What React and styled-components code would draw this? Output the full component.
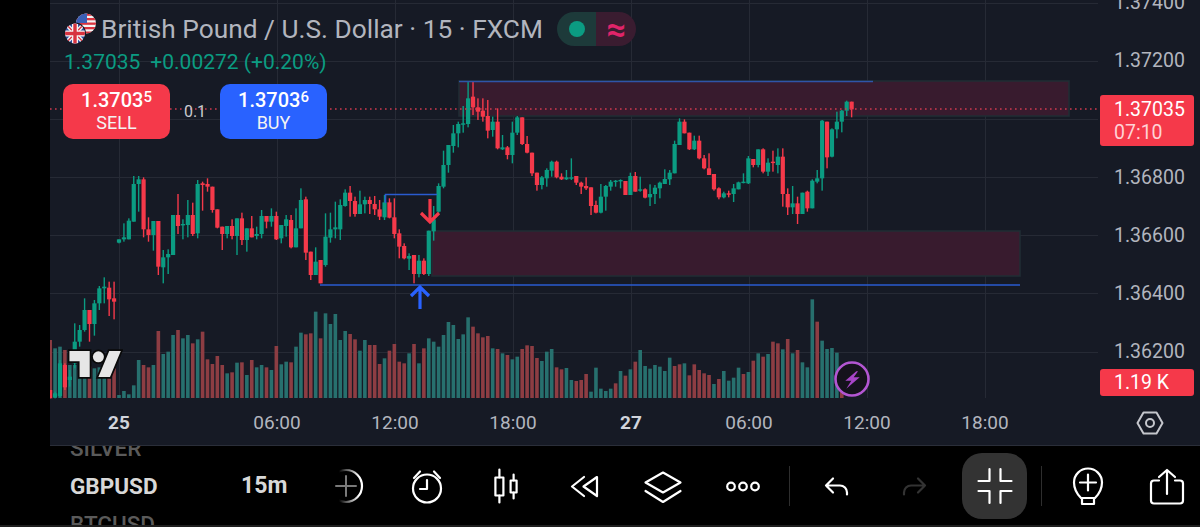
import React from 'react'
import styled, { createGlobalStyle } from 'styled-components'

const GREEN = '#0b9c82'
const RED = '#f5394a'
const BLUE = '#2962ff'
const PANEL = '#161a25'
const TEXT = '#b2b5be'

// x of a candle, k = 0 is the first bar after the weekend gap
const barX = (k) => 119 + k * 4.917

// [bodyTop, bodyBottom, wickTop, wickBottom, colour], read off the chart in 3x units
const segmentA = [
  [690, 715, 690, 715, 'r'], [700, 712, 695, 715, 'g'], [610, 708, 600, 712, 'g'], [615, 682, 610, 690, 'r'],
  [650, 660, 630, 680, 'g'], [545, 610, 490, 625, 'g'], [510, 545, 495, 560, 'g'], [450, 510, 415, 515, 'g'],
  [450, 492, 450, 545, 'r'], [430, 492, 420, 527, 'g'], [385, 430, 378, 450, 'g'], [380, 385, 352, 430, 'g'],
  [383, 418, 365, 468, 'r'], [415, 425, 365, 478, 'r'],
  [238, 248, 238, 250, 'g'], [232, 238, 190, 245, 'g'], [182, 238, 175, 238, 'g'], [72, 185, 48, 185, 'g'],
  [58, 72, 48, 155, 'g'], [58, 208, 52, 232, 'r'], [208, 225, 172, 245, 'r'], [183, 225, 183, 272, 'g'],
  [183, 320, 183, 345, 'r'], [292, 322, 270, 370, 'g'], [282, 292, 268, 342, 'g'], [165, 285, 165, 285, 'g'],
  [165, 198, 102, 222, 'r'], [192, 195, 178, 238, 'g'], [165, 195, 120, 232, 'g'], [165, 222, 128, 228, 'r'],
  [72, 220, 60, 235, 'g'], [70, 75, 65, 152, 'r'], [72, 80, 55, 95, 'r'], [80, 150, 80, 158, 'r'],
  [148, 203, 148, 205, 'r'], [200, 222, 200, 270, 'r'], [198, 222, 198, 235, 'g'], [198, 228, 178, 238, 'r'],
  [175, 228, 175, 285, 'g'], [175, 240, 158, 255, 'r'], [205, 240, 205, 275, 'g'], [205, 232, 168, 232, 'r'],
  [222, 228, 200, 238, 'g'], [168, 222, 150, 235, 'g'], [168, 185, 168, 205, 'r'], [168, 185, 145, 200, 'g'],
  [168, 238, 155, 240, 'r'], [195, 235, 195, 250, 'g'], [178, 198, 165, 230, 'g'], [180, 262, 165, 265, 'r'],
  [205, 262, 145, 262, 'g'], [120, 205, 85, 205, 'g'], [118, 278, 110, 300, 'r'], [275, 345, 275, 360, 'r'],
  [305, 345, 262, 345, 'g'],
]

const segmentB = [
  [570, 640, 570, 640, 'r'], [500, 585, 430, 590, 'g'], [478, 503, 428, 518, 'g'], [472, 478, 395, 505, 'g'],
  [405, 478, 388, 510, 'g'], [368, 408, 358, 410, 'g'], [368, 393, 348, 440, 'r'], [393, 432, 380, 440, 'r'],
  [403, 432, 362, 432, 'g'], [390, 403, 380, 430, 'g'], [390, 402, 380, 432, 'r'], [402, 418, 378, 435, 'r'],
  [418, 440, 390, 450, 'r'], [397, 442, 375, 450, 'g'], [397, 443, 385, 445, 'r'], [442, 492, 385, 505, 'r'],
  [490, 530, 478, 565, 'r'], [528, 565, 520, 568, 'r'], [558, 566, 550, 600, 'g'], [555, 612, 555, 640, 'r'],
  [572, 612, 555, 622, 'g'], [572, 612, 565, 615, 'r'], [482, 612, 482, 618, 'g'], [448, 484, 408, 512, 'g'],
  [348, 425, 340, 428, 'g'], [285, 350, 242, 355, 'g'], [225, 285, 225, 308, 'g'], [190, 228, 165, 248, 'g'],
  [162, 190, 155, 232, 'g'], [160, 162, 108, 188, 'g'], [85, 162, 35, 172, 'g'], [80, 112, 35, 135, 'r'],
  [112, 125, 85, 150, 'r'], [122, 140, 85, 155, 'r'], [138, 182, 90, 205, 'r'], [155, 180, 140, 200, 'g'],
  [155, 235, 115, 238, 'r'], [232, 238, 195, 240, 'g'], [232, 255, 228, 268, 'r'], [188, 255, 155, 280, 'g'],
  [142, 188, 138, 195, 'g'], [142, 222, 142, 225, 'r'], [222, 248, 198, 250, 'r'], [248, 310, 248, 318, 'r'],
  [308, 345, 308, 362, 'r'], [322, 345, 318, 358, 'g'], [300, 325, 295, 350, 'g'], [275, 302, 272, 320, 'g'],
  [275, 322, 272, 325, 'r'], [320, 328, 310, 330, 'r'], [322, 328, 300, 330, 'g'], [322, 325, 265, 330, 'g'],
  [318, 338, 318, 345, 'r'], [338, 350, 335, 372, 'r'], [348, 355, 322, 360, 'r'],
]

const segmentC = [
  [352, 408, 352, 435, 'r'], [405, 428, 392, 430, 'r'], [380, 428, 342, 430, 'g'], [348, 380, 345, 422, 'g'],
  [335, 350, 330, 362, 'g'], [332, 335, 330, 350, 'g'], [330, 332, 328, 355, 'g'], [333, 375, 333, 375, 'r'],
  [318, 375, 308, 375, 'g'], [318, 365, 306, 365, 'r'], [358, 362, 320, 365, 'g'], [358, 383, 355, 385, 'r'],
  [372, 382, 343, 408, 'g'], [353, 372, 345, 402, 'g'], [338, 355, 335, 385, 'g'], [327, 342, 298, 342, 'g'],
  [308, 328, 300, 345, 'g'], [222, 310, 212, 310, 'g'], [155, 225, 145, 225, 'g'], [155, 190, 148, 190, 'r'],
  [188, 238, 188, 240, 'r'], [212, 238, 197, 240, 'g'], [212, 265, 197, 268, 'r'], [265, 295, 255, 298, 'r'],
  [295, 315, 250, 315, 'r'], [312, 358, 312, 362, 'r'], [355, 382, 352, 388, 'r'], [370, 382, 365, 385, 'g'],
  [370, 372, 362, 382, 'r'], [355, 372, 342, 396, 'g'], [337, 358, 335, 358, 'g'], [335, 338, 310, 340, 'g'],
  [265, 340, 258, 342, 'g'], [267, 285, 267, 292, 'r'], [238, 285, 238, 292, 'g'], [238, 305, 235, 310, 'r'],
  [278, 305, 265, 318, 'g'], [275, 277, 242, 305, 'r'], [260, 285, 235, 310, 'g'], [260, 372, 235, 410, 'r'],
  [372, 412, 355, 435, 'r'], [400, 412, 348, 432, 'g'], [400, 432, 380, 462, 'r'], [368, 432, 368, 432, 'g'],
  [365, 415, 362, 425, 'r'], [332, 415, 328, 415, 'g'], [325, 335, 300, 340, 'g'], [152, 325, 150, 362, 'g'],
  [155, 262, 155, 295, 'r'], [178, 260, 175, 262, 'g'], [155, 178, 125, 205, 'g'], [122, 155, 120, 187, 'g'],
  [95, 122, 92, 138, 'g'], [95, 118, 95, 142, 'r'],
]

const candles = [
  ...segmentA.map((c) => [...c, 160]),
  ...segmentB.map((c) => [...c, 70]),
  ...segmentC.map((c) => [...c, 70]),
]

// [top, colour] with the three crops they were read from
const volumeA = [
  [90, 'r'], [115, 'g'], [110, 'g'], [120, 'r'], [165, 'g'], [165, 'g'], [180, 'g'], [172, 'g'], [170, 'r'],
  [175, 'g'], [172, 'g'], [180, 'g'], [170, 'r'], [175, 'r'],
  [255, 'g'], [243, 'g'], [253, 'g'], [226, 'g'], [150, 'g'], [165, 'r'], [172, 'r'], [165, 'g'], [63, 'r'],
  [132, 'g'], [125, 'g'], [75, 'g'], [60, 'r'], [85, 'g'], [75, 'g'], [100, 'r'], [88, 'g'], [65, 'r'],
  [148, 'r'], [162, 'r'], [138, 'r'], [165, 'r'], [190, 'g'], [187, 'r'], [158, 'g'], [157, 'r'], [195, 'g'],
  [150, 'r'], [172, 'g'], [165, 'g'], [172, 'r'], [180, 'g'], [108, 'r'], [163, 'g'], [155, 'g'], [157, 'r'],
  [110, 'g'], [68, 'g'], [73, 'r'], [70, 'r'], [5, 'g'],
]
const volumeB = [
  [115, 'r'], [40, 'g'], [72, 'g'], [42, 'g'], [120, 'g'], [93, 'g'], [102, 'r'], [118, 'r'], [152, 'g'],
  [120, 'g'], [135, 'r'], [135, 'r'], [192, 'r'], [175, 'g'], [152, 'r'], [132, 'r'], [185, 'r'], [190, 'r'],
  [160, 'g'], [132, 'r'], [190, 'g'], [145, 'r'], [115, 'g'], [125, 'g'], [140, 'g'], [105, 'g'], [66, 'g'],
  [75, 'g'], [117, 'g'], [103, 'g'], [52, 'g'], [80, 'r'], [100, 'r'], [112, 'r'], [108, 'r'], [145, 'g'],
  [147, 'r'], [160, 'g'], [165, 'r'], [178, 'g'], [170, 'g'], [147, 'r'], [136, 'r'], [138, 'r'], [174, 'r'],
  [183, 'g'], [155, 'g'], [147, 'g'], [202, 'r'], [208, 'r'], [204, 'g'], [240, 'g'], [243, 'r'], [240, 'r'],
  [222, 'r'],
]
const volumeC = [
  [305, 'g'], [233, 'g'], [296, 'g'], [303, 'g'], [296, 'g'], [280, 'r'], [243, 'g'], [257, 'r'], [238, 'g'],
  [215, 'r'], [180, 'g'], [228, 'g'], [236, 'g'], [225, 'g'], [230, 'g'], [243, 'g'], [203, 'g'], [228, 'r'],
  [223, 'r'], [220, 'g'], [256, 'r'], [223, 'r'], [240, 'r'], [250, 'r'], [255, 'r'], [282, 'g'], [267, 'r'],
  [243, 'g'], [272, 'g'], [263, 'g'], [233, 'g'], [252, 'r'], [246, 'g'], [212, 'r'], [190, 'g'], [200, 'r'],
  [192, 'g'], [155, 'r'], [160, 'r'], [178, 'g'], [147, 'r'], [190, 'g'], [180, 'r'], [217, 'g'], [232, 'g'],
  [28, 'g'], [95, 'r'], [152, 'g'], [177, 'g'], [174, 'g'], [188, 'g'], [300, 'r'],
]

const volumes = [
  ...volumeA.map(([v, c]) => [310 + v / 3, c]),
  ...volumeB.map(([v, c]) => [300 + v / 3, c]),
  ...volumeC.map(([v, c]) => [290 + v / 3, c]),
]

const gridX = [119, 277, 395, 513, 631, 749, 867, 985]
const gridY = [3, 61, 119, 177, 235, 293, 352]
const priceTicks = ['1.37400', '1.37200', '', '1.36800', '1.36600', '1.36400', '1.36200']

const GlobalStyle = createGlobalStyle`
  html, body {
    margin: 0;
    padding: 0;
    background: #000;
    font-family: Roboto, 'Liberation Sans', sans-serif;
  }
`

const Screen = styled.div`
  width: 1200px;
  height: 527px;
  display: flex;
  flex-direction: column;
  overflow: hidden;
  background: #000;
`

const Panel = styled.section`
  margin-left: 50px;
  height: 446px;
  flex: none;
  display: flex;
  flex-direction: column;
  background: ${PANEL};
  border-bottom: 1px solid #2a2e39;
  box-sizing: border-box;
`

const ChartRow = styled.div`
  height: 400px;
  flex: none;
  display: flex;
`

const ChartPane = styled.div`
  position: relative;
  width: 1050px;
  flex: none;
`

const ChartSvg = styled.svg`
  display: block;
`

const Legend = styled.div`
  position: absolute;
  left: 12px;
  top: 12px;
  display: flex;
  flex-direction: column;
`

const TitleRow = styled.div`
  display: flex;
  align-items: center;
  height: 34px;
`

const Title = styled.span`
  margin-left: 1px;
  font-size: 26.3px;
  color: ${TEXT};
  white-space: nowrap;
`

const StatusPill = styled.div`
  margin-left: 14px;
  width: 79px;
  height: 34px;
  display: flex;
  border-radius: 17px;
  overflow: hidden;
`

const StatusPart = styled.div`
  flex: 1;
  display: flex;
  align-items: center;
  justify-content: center;
  background: ${(p) => p.$bg};
  color: #e0246a;
  font-size: 34px;
  line-height: 1;
  font-weight: 700;
`

const StatusDot = styled.span`
  width: 16px;
  height: 16px;
  border-radius: 50%;
  background: ${GREEN};
`

const Values = styled.div`
  margin-top: 4px;
  margin-left: 2px;
  height: 24px;
  line-height: 24px;
  display: flex;
  gap: 10px;
  font-size: 21px;
  color: ${GREEN};
`

const OrderRow = styled.div`
  margin-top: 10px;
  margin-left: 1px;
  display: flex;
  align-items: center;
`

const OrderButton = styled.div`
  width: 107px;
  height: 55px;
  border-radius: 10px;
  background: ${(p) => p.$bg};
  color: #fff;
  display: flex;
  flex-direction: column;
  align-items: center;
  justify-content: center;
`

const OrderPrice = styled.div`
  font-size: 20px;
  font-weight: 500;
  line-height: 23px;

  & sup {
    font-size: 15px;
    line-height: 0;
    vertical-align: 5px;
  }
`

const OrderLabel = styled.div`
  font-size: 18px;
  line-height: 22px;
  color: #f3f3f3;
`

const Quantity = styled.div`
  width: 50px;
  text-align: center;
  font-size: 16px;
  color: #c8cad0;
`

const WatermarkLogo = styled.svg`
  position: absolute;
  left: 18px;
  top: 345px;
`

const BoltBadge = styled.svg`
  position: absolute;
  left: 783px;
  top: 360px;
`

const PriceAxis = styled.div`
  position: relative;
  flex: 1;
  display: flex;
  flex-direction: column;
  margin-top: -26px;
  padding-left: 14px;
`

const Tick = styled.div`
  height: 58.2px;
  line-height: 58.2px;
  flex: none;
  font-size: 19.5px;
  color: ${TEXT};
`

const PriceTag = styled.div`
  position: absolute;
  left: 0;
  top: ${(p) => p.$top}px;
  width: 94px;
  height: ${(p) => p.$height}px;
  box-sizing: border-box;
  padding-left: 14px;
  background: ${RED};
  border-radius: 3px;
  color: #fff;
  font-size: 19.5px;
  display: flex;
  flex-direction: column;
  justify-content: center;
`

const TagLine = styled.div`
  line-height: 23px;
  color: ${(p) => p.$dim ? '#ffd2d6' : '#fff'};
`

const BottomRow = styled.div`
  flex: 1;
  display: flex;
`

const TimeAxis = styled.div`
  width: 1050px;
  flex: none;
  padding-left: 10px;
  box-sizing: border-box;
  display: flex;
  align-items: center;
`

const TimeCell = styled.div`
  width: 118px;
  flex: none;
  text-align: center;
  font-size: 19px;
  font-weight: ${(p) => p.$day ? 700 : 400};
  color: ${(p) => p.$day ? '#d1d4dc' : TEXT};
`

const TimeGap = styled.div`
  width: 40px;
  flex: none;
`

const Corner = styled.div`
  flex: 1;
  display: flex;
  align-items: center;
  justify-content: center;
`

const Toolbar = styled.nav`
  height: 81px;
  flex: none;
  display: flex;
  align-items: center;
  box-sizing: border-box;
  border-bottom: 2px solid #1e1e1e;
`

const SymbolPicker = styled.div`
  width: 241px;
  height: 79px;
  flex: none;
  padding-left: 70px;
  box-sizing: border-box;
  display: flex;
  flex-direction: column;
  justify-content: center;
  overflow: hidden;
`

const SymbolItem = styled.div`
  height: 38px;
  line-height: 38px;
  flex: none;
  font-size: 22.5px;
  font-weight: ${(p) => p.$active ? 700 : 500};
  color: ${(p) => p.$active ? '#d8d8d8' : '#5a5a5a'};
`

const Interval = styled.div`
  width: 66px;
  flex: none;
  font-size: 23px;
  font-weight: 700;
  color: #d8d8d8;
`

const Slot = styled.div`
  width: ${(p) => p.$w}px;
  flex: none;
  display: flex;
  justify-content: center;
`

const Divider = styled.div`
  width: 1px;
  height: 40px;
  background: #2e2e2e;
`

const ActiveButton = styled.button`
  width: 65px;
  height: 66px;
  flex: none;
  padding: 0;
  border: 0;
  border-radius: 20px;
  background: #333;
  display: flex;
  align-items: center;
  justify-content: center;
`

const ToolIcon = ({ color = '#fff', children }) => (
  <svg width='40' height='40' viewBox='0 0 40 40' fill='none' stroke={color} strokeWidth='2.2' strokeLinecap='round' strokeLinejoin='round'>
    {children}
  </svg>
)

const Flags = () => (
  <svg width='38' height='34' viewBox='0 0 38 34'>
    <defs>
      <clipPath id='usClip'><circle cx='24' cy='11.5' r='10' /></clipPath>
      <clipPath id='ukClip'><circle cx='13' cy='21.5' r='10' /></clipPath>
    </defs>
    <g clipPath='url(#usClip)'>
      <rect x='13' y='0' width='22' height='23' fill='#f4f4f4' />
      {[1.5, 6, 10.5, 15, 19.5].map((y) => (
        <rect key={y} x='13' y={y} width='22' height='2.3' fill='#d8333f' />
      ))}
      <rect x='13' y='0' width='12' height='11' fill='#3b5fb5' />
    </g>
    <circle cx='13' cy='21.5' r='11' fill={PANEL} />
    <g clipPath='url(#ukClip)'>
      <rect x='2' y='10' width='22' height='23' fill='#2f4f9e' />
      <path d='M2 10L24 33M24 10L2 33' stroke='#f4f4f4' strokeWidth='4' />
      <path d='M2 10L24 33M24 10L2 33' stroke='#d8333f' strokeWidth='1.4' />
      <path d='M13 10V33M2 21.5H24' stroke='#f4f4f4' strokeWidth='6' />
      <path d='M13 10V33M2 21.5H24' stroke='#d8333f' strokeWidth='3.4' />
    </g>
  </svg>
)

const Chart = () => (
  <ChartSvg width='1050' height='400' viewBox='50 0 1050 400'>
    {gridY.map((y) => (
      <line key={y} x1='50' x2='1098' y1={y + 0.5} y2={y + 0.5} stroke='#262a35' />
    ))}
    {gridX.map((x) => (
      <line key={x} x1={x + 0.5} x2={x + 0.5} y1='0' y2='398' stroke='#262a35' />
    ))}

    {volumes.map(([top, c], i) => (
      <rect
        key={i}
        x={barX(i - 14) - 1.8}
        y={top}
        width='3.6'
        height={398 - top}
        fill={c === 'g' ? '#27706e' : '#8d3d43'}
      />
    ))}

    <rect x='459' y='81' width='610' height='35' fill='#381b2e' stroke='#212e35' strokeWidth='1.5' />
    <rect x='432' y='231' width='588' height='45' fill='#381b2e' stroke='#212e35' strokeWidth='1.5' />

    {candles.map(([bodyTop, bodyBottom, wickTop, wickBottom, c, base], i) => {
      const x = barX(i - 14)
      const colour = c === 'g' ? GREEN : RED
      return (
        <g key={i} fill={colour}>
          <rect x={x - 0.7} y={base + wickTop / 3} width='1.4' height={(wickBottom - wickTop) / 3} />
          <rect x={x - 2.1} y={base + bodyTop / 3} width='4.2' height={Math.max(1.4, (bodyBottom - bodyTop) / 3)} />
        </g>
      )
    })}

    <line x1='459' x2='873' y1='81.5' y2='81.5' stroke='#2f55a8' strokeWidth='1.3' />
    <line x1='320' x2='1020' y1='285' y2='285' stroke='#2a5bd0' strokeWidth='1.6' />
    <path d='M385.5 203V194.5H437' fill='none' stroke='#2a5bd0' strokeWidth='1.6' />
    <line x1='50' x2='1100' y1='109' y2='109' stroke='#cf3a50' strokeWidth='1.3' strokeDasharray='1.6 3.4' />

    <path d='M430 199V222M421 213L430 222L439 213' fill='none' stroke={RED} strokeWidth='3.2' />
    <path d='M420 309V287M411 296L420 287L429 296' fill='none' stroke={BLUE} strokeWidth='3.2' />
  </ChartSvg>
)

const App = () => (
  <Screen>
    <GlobalStyle />
    <Panel>
      <ChartRow>
        <ChartPane>
          <Chart />
          <WatermarkLogo width='55' height='41' viewBox='-1 0 38 28'>
            <g fill='#e6e6e6' stroke='#0a0a0a' strokeWidth='2.4' paintOrder='stroke'>
              <path d='M14 22H7V11H0V4h14v18zM28 22h-8l7.5-18h8L28 22z' />
              <circle cx='20' cy='8' r='3.8' />
            </g>
          </WatermarkLogo>
          <BoltBadge width='38' height='38' viewBox='0 0 38 38'>
            <circle cx='19' cy='19' r='16.5' fill='#15121c' stroke='#b356d2' strokeWidth='2.6' />
            <path d='M23.3 11.3L12.3 20.7H18.3L13.3 28.7L26.7 17.3H20.7L25 11.3Z' fill='#a845c8' />
          </BoltBadge>
          <Legend>
            <TitleRow>
              <Flags />
              <Title>British Pound / U.S. Dollar · 15 · FXCM</Title>
              <StatusPill>
                <StatusPart $bg='#1d3a3a'><StatusDot /></StatusPart>
                <StatusPart $bg='#3a1c30'>≈</StatusPart>
              </StatusPill>
            </TitleRow>
            <Values>
              <span>1.37035</span>
              <span>+0.00272 (+0.20%)</span>
            </Values>
            <OrderRow>
              <OrderButton $bg={RED}>
                <OrderPrice>1.3703<sup>5</sup></OrderPrice>
                <OrderLabel>SELL</OrderLabel>
              </OrderButton>
              <Quantity>0.1</Quantity>
              <OrderButton $bg={BLUE}>
                <OrderPrice>1.3703<sup>6</sup></OrderPrice>
                <OrderLabel>BUY</OrderLabel>
              </OrderButton>
            </OrderRow>
          </Legend>
        </ChartPane>
        <PriceAxis>
          {priceTicks.map((t, i) => <Tick key={i}>{t}</Tick>)}
          <PriceTag $top={121} $height={51}>
            <TagLine>1.37035</TagLine>
            <TagLine $dim>07:10</TagLine>
          </PriceTag>
          <PriceTag $top={395} $height={27}>
            <TagLine>1.19 K</TagLine>
          </PriceTag>
        </PriceAxis>
      </ChartRow>
      <BottomRow>
        <TimeAxis>
          <TimeCell $day>25</TimeCell>
          <TimeGap />
          <TimeCell>06:00</TimeCell>
          <TimeCell>12:00</TimeCell>
          <TimeCell>18:00</TimeCell>
          <TimeCell $day>27</TimeCell>
          <TimeCell>06:00</TimeCell>
          <TimeCell>12:00</TimeCell>
          <TimeCell>18:00</TimeCell>
        </TimeAxis>
        <Corner>
          <svg width='28' height='26' viewBox='0 0 28 26' fill='none' stroke='#c4c6cc' strokeWidth='2'>
            <path d='M7.5 2.5H20.5L26.5 13L20.5 23.5H7.5L1.5 13Z' strokeLinejoin='round' />
            <circle cx='14' cy='13' r='4' />
          </svg>
        </Corner>
      </BottomRow>
    </Panel>
    <Toolbar>
      <SymbolPicker>
        <SymbolItem>SILVER</SymbolItem>
        <SymbolItem $active>GBPUSD</SymbolItem>
        <SymbolItem>BTCUSD</SymbolItem>
      </SymbolPicker>
      <Interval>15m</Interval>
      <Slot $w={88}>
        <ToolIcon color='url(#fade)'>
          <defs>
            <linearGradient id='fade' gradientUnits='userSpaceOnUse' x1='8' x2='28' y1='0' y2='0'>
              <stop offset='0' stopColor='#fff' stopOpacity='0' />
              <stop offset='1' stopColor='#fff' />
            </linearGradient>
          </defs>
          <circle cx='15' cy='20' r='16' />
          <path d='M15 10V30M5 20H25' stroke='#7a7a7a' strokeWidth='2' />
        </ToolIcon>
      </Slot>
      <Slot $w={64}>
        <ToolIcon>
          <circle cx='20' cy='22.5' r='14' />
          <path d='M20 14V23H13M7 12L13 5.5M33 12L27 5.5' />
        </ToolIcon>
      </Slot>
      <Slot $w={94}>
        <ToolIcon>
          <rect x='9.4' y='11.5' width='8' height='18' />
          <rect x='24.6' y='14.5' width='6' height='12' />
          <path d='M13.4 3.5V11.5M13.4 29.5V36.5M27.6 8.5V14.5M27.6 26.5V32.5' />
        </ToolIcon>
      </Slot>
      <Slot $w={62}>
        <ToolIcon>
          <path d='M20 11L8 20.5L20 30M33 11L19.5 20.5L33 30Z' />
        </ToolIcon>
      </Slot>
      <Slot $w={96}>
        <ToolIcon>
          <path d='M20 6.5L37.5 16.5L20 26.5L2.5 16.5ZM2.5 25L20 36L37.5 25' />
        </ToolIcon>
      </Slot>
      <Slot $w={64}>
        <ToolIcon>
          <circle cx='8' cy='20.5' r='3.8' />
          <circle cx='20' cy='20.5' r='3.8' />
          <circle cx='32' cy='20.5' r='3.8' />
        </ToolIcon>
      </Slot>
      <Slot $w={29}><Divider /></Slot>
      <Slot $w={64}>
        <ToolIcon>
          <path d='M17 12.5L10 19.5L17 26.5M10 19.5H24a7 7 0 0 1 7 7v2' />
        </ToolIcon>
      </Slot>
      <Slot $w={94}>
        <ToolIcon color='#333'>
          <path d='M23 12.5L30 19.5L23 26.5M30 19.5H16a7 7 0 0 0 -7 7v2' />
        </ToolIcon>
      </Slot>
      <ActiveButton>
        <ToolIcon>
          <path d='M14.5 3V15H3.5M25.5 3V15H36.5M3.5 25H14.5V37M36.5 25H25.5V37' />
        </ToolIcon>
      </ActiveButton>
      <Slot $w={28}><Divider /></Slot>
      <Slot $w={66}>
        <ToolIcon>
          <path d='M13 32C9 28 6 23 6 16.5a14 14 0 0 1 28 0C34 23 31 28 27 32Z' />
          <rect x='14' y='32' width='12' height='6' />
          <path d='M20 8.5V24.5M12 16.5H28' />
        </ToolIcon>
      </Slot>
      <Slot $w={92}>
        <ToolIcon>
          <path d='M20 4V28M12 11L20 4L28 11M12 14.5H7a3 3 0 0 0 -3 3V34.5a3 3 0 0 0 3 3H33a3 3 0 0 0 3 -3V17.5a3 3 0 0 0 -3 -3H28' />
        </ToolIcon>
      </Slot>
    </Toolbar>
  </Screen>
)

export default App
